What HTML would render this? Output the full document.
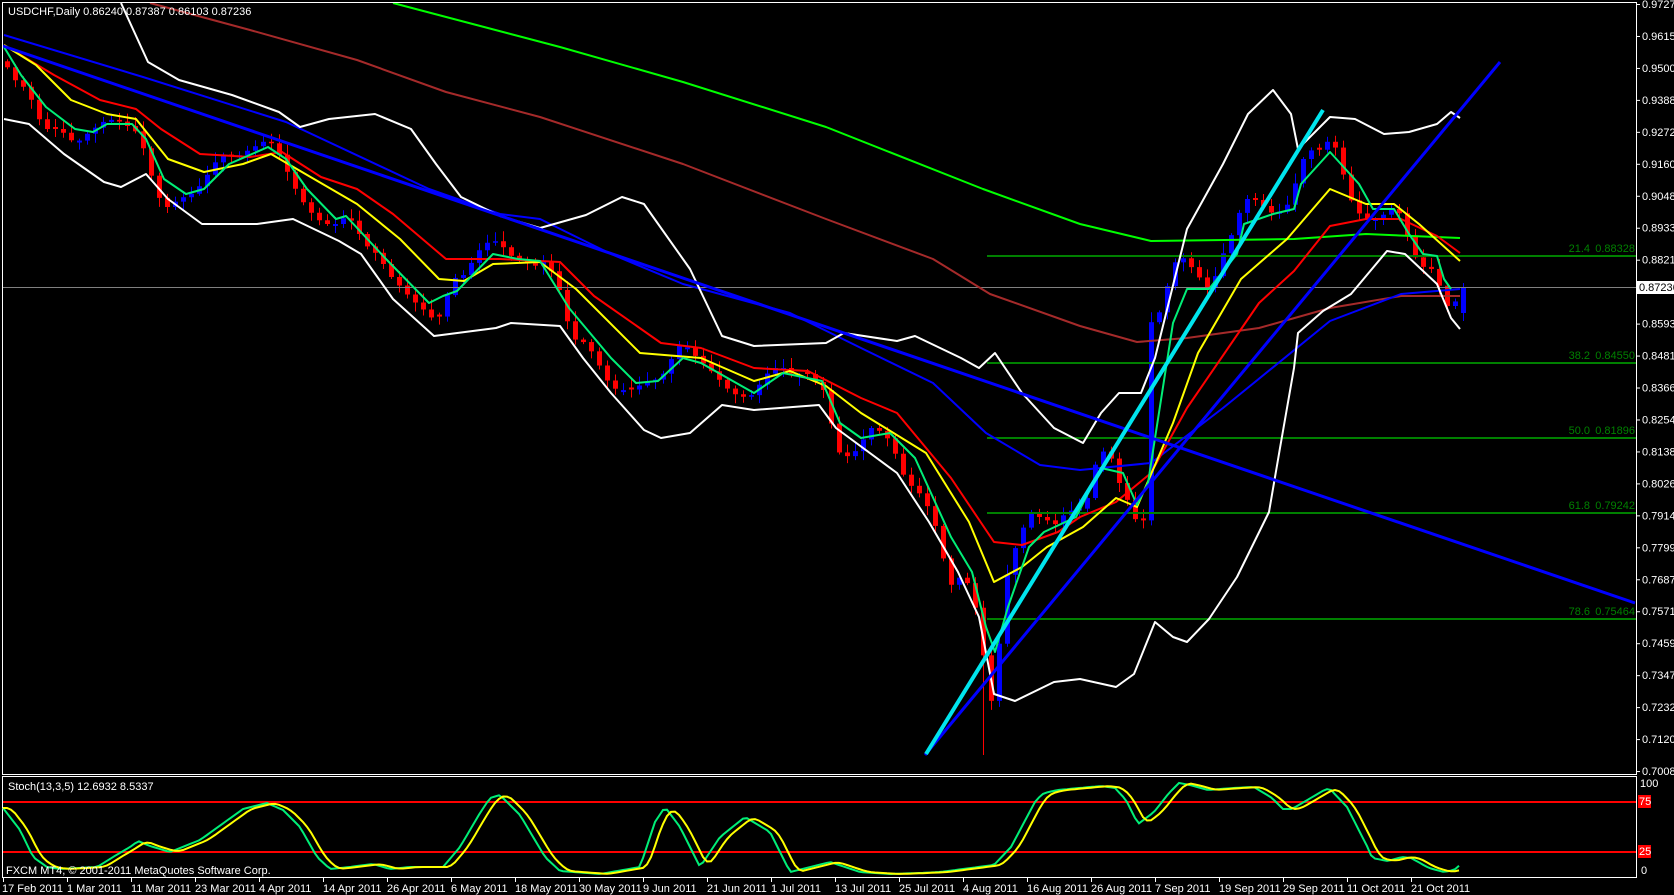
<!DOCTYPE html>
<html><head><meta charset="utf-8"><style>
html,body{margin:0;padding:0;background:#000;width:1674px;height:895px;overflow:hidden}
svg{display:block}
text{font-family:"Liberation Sans",sans-serif;font-size:11px}
</style></head><body>
<svg id="s" width="1674" height="895" viewBox="0 0 1674 895" xmlns="http://www.w3.org/2000/svg">
<rect width="1674" height="895" fill="#000"/>
<g id="g"></g>
<g fill="none" stroke-linejoin="round">
<polyline stroke="#808080" stroke-width="1" points="3,287.5 1636,287.5"/>
<g stroke="#008000" stroke-width="2">
<line x1="987" y1="256" x2="1636" y2="256"/><line x1="987" y1="363" x2="1636" y2="363"/>
<line x1="987" y1="438" x2="1636" y2="438"/><line x1="987" y1="513" x2="1636" y2="513"/>
<line x1="987" y1="619" x2="1636" y2="619"/></g>
<polyline stroke="#00ff00" stroke-width="2" points="393,3 560,47 683,82 826,127 983,189 1080,224 1151,241 1294,239 1366,234 1460,238"/>
<polyline stroke="#a52a2a" stroke-width="2" points="150,3 250,30 357,60 446,92 540,117 683,164 826,219 933,259 990,294 1080,326 1137,342 1187,338 1259,328 1330,308 1401,296 1460,296"/>
<polyline stroke="#0000ff" stroke-width="2" points="4,35 143,77 286,122 429,189 500,214 540,219 611,254 683,284 790,313 861,348 933,383 986,433 1040,465 1080,470 1151,463 1223,408 1330,321 1401,294 1460,289"/>
<polyline stroke="#ffffff" stroke-width="2" points="121,3 148,62 179,80 232,95 279,112 300,127 329,119 375,114 411,129 436,164 461,197 500,216 540,228 586,215 622,197 644,204 690,269 722,336 754,346 826,343 844,333 897,341 915,336 961,358 979,368 995,353 1022,393 1054,428 1083,443 1101,413 1119,393 1141,393 1155,358 1187,229 1223,164 1248,114 1273,90 1291,114 1298,149 1330,117 1355,119 1384,134 1409,132 1437,124 1451,112 1460,118"/>
<polyline stroke="#ffffff" stroke-width="2" points="4,119 29,124 64,154 104,182 121,187 146,174 168,199 202,224 257,224 293,219 339,241 361,254 393,299 434,336 496,328 511,323 560,326 583,358 611,393 644,430 661,438 690,433 722,405 754,410 819,405 836,428 897,473 929,522 958,572 979,617 994,694 1015,701 1054,682 1080,679 1116,687 1134,674 1155,622 1173,637 1187,642 1209,619 1237,577 1269,512 1280,448 1294,368 1298,333 1323,311 1351,294 1387,251 1405,254 1437,284 1451,318 1460,329"/>
<polyline stroke="#ff0000" stroke-width="2" points="4,45 54,75 100,100 136,109 161,129 200,154 250,157 282,152 321,177 357,189 393,214 446,259 500,259 560,262 594,296 661,343 701,348 754,368 808,371 861,398 897,413 951,478 994,542 1022,545 1058,532 1080,517 1116,502 1151,473 1187,408 1259,303 1294,271 1330,226 1366,219 1401,219 1437,236 1460,253"/>
<polyline stroke="#ffff00" stroke-width="2" points="4,45 36,65 71,100 107,114 136,119 168,159 204,172 243,164 271,154 314,179 357,204 400,239 439,279 464,281 493,264 540,262 576,289 640,353 701,358 754,381 790,371 826,386 861,413 926,453 969,522 994,582 1022,567 1047,547 1083,527 1116,498 1137,507 1173,423 1198,353 1241,279 1287,239 1330,189 1366,204 1394,204 1419,224 1460,261"/>
<polyline stroke="#00ee77" stroke-width="2" points="4,47 21,75 46,107 75,129 93,132 107,124 132,124 146,139 164,179 186,194 204,189 229,164 268,147 286,159 307,189 336,219 346,216 386,259 429,303 443,296 457,291 493,254 518,259 540,261 569,308 611,358 636,383 658,381 683,358 701,363 754,393 783,373 822,381 840,423 861,438 890,433 915,458 951,537 972,572 986,627 995,652 1008,607 1029,547 1044,532 1076,517 1101,468 1123,473 1137,505 1148,483 1173,323 1187,289 1209,289 1237,254 1244,224 1273,214 1294,209 1301,184 1330,152 1359,184 1373,209 1394,209 1409,234 1423,254 1437,256 1444,279 1451,289"/>
<line stroke="#0000ff" stroke-width="3" x1="3" y1="46" x2="1635" y2="603"/>
<line stroke="#0000ff" stroke-width="3" x1="925" y1="755" x2="1500" y2="62"/>
<line stroke="#00e5ee" stroke-width="4" x1="926" y1="754" x2="1323" y2="110"/>
</g>
<g fill="#008000" text-anchor="end">
<text x="1590" y="252">21.4</text><text x="1635" y="252">0.88328</text>
<text x="1590" y="359">38.2</text><text x="1635" y="359">0.84550</text>
<text x="1590" y="434">50.0</text><text x="1635" y="434">0.81896</text>
<text x="1590" y="509">61.8</text><text x="1635" y="509">0.79242</text>
<text x="1590" y="615">78.6</text><text x="1635" y="615">0.75464</text>
</g>
<rect x="2.5" y="2.5" width="1634" height="772" fill="none" stroke="#fff" stroke-width="1"/>
<rect x="2.5" y="776.5" width="1634" height="101" fill="none" stroke="#fff" stroke-width="1"/>
<line x1="3" y1="802" x2="1636" y2="802" stroke="#ff0000" stroke-width="2"/>
<line x1="3" y1="852" x2="1636" y2="852" stroke="#ff0000" stroke-width="2"/>
<g id="st" fill="none" stroke-width="2"></g>
<g fill="#fff" id="ax"></g>
<text x="8" y="15" fill="#fff">USDCHF,Daily  0.86240 0.87387 0.86103 0.87236</text>
<text x="8" y="790" fill="#fff">Stoch(13,3,5) 12.6932 8.5337</text>
<text x="6" y="874" fill="#fff">FXCM MT4, © 2001-2011 MetaQuotes Software Corp.</text>
<rect x="1638" y="795" width="13" height="13" fill="#ff0000"/><text x="1639" y="805" fill="#fff">75</text>
<rect x="1638" y="845" width="13" height="13" fill="#ff0000"/><text x="1639" y="855" fill="#fff">25</text>
<text x="1640" y="787" fill="#fff">100</text><text x="1641" y="874" fill="#fff">0</text>
<rect x="1637" y="281" width="37" height="13" fill="#fff"/><text x="1639" y="291" fill="#000">0.87236</text>
</svg>
<script>
(function(){
var NS="http://www.w3.org/2000/svg";
function el(p,t,a,txt){var e=document.createElementNS(NS,t);for(var k in a)e.setAttribute(k,a[k]);if(txt!=null)e.textContent=txt;p.appendChild(e);return e;}
function interp(P,x){if(x<=P[0][0])return P[0][1];for(var i=1;i<P.length;i++){if(x<=P[i][0]){var a=P[i-1],b=P[i];if(b[0]==a[0])return b[1];return a[1]+(b[1]-a[1])*(x-a[0])/(b[0]-a[0]);}}return P[P.length-1][1];}
var C=[[4,60],[11,77],[27,90],[43,129],[59,129],[75,144],[89,132],[107,119],[121,122],[139,134],[146,159],[155,189],[164,209],[179,199],[195,192],[211,169],[220,154],[236,157],[250,149],[268,139],[282,159],[291,182],[307,209],[323,224],[339,224],[346,214],[355,226],[364,244],[379,256],[388,274],[395,281],[411,299],[427,313],[436,323],[443,308],[452,279],[466,274],[475,254],[491,239],[500,244],[514,259],[536,266],[546,259],[555,281],[563,299],[570,338],[586,343],[595,358],[611,388],[628,391],[644,383],[660,378],[667,368],[676,348],[683,343],[697,358],[708,368],[722,383],[731,393],[747,398],[754,393],[763,378],[772,368],[786,368],[795,378],[804,371],[811,378],[826,393],[835,448],[844,458],[860,448],[867,428],[876,428],[892,443],[899,468],[908,483],[924,498],[931,517],[940,537],[947,587],[956,582],[963,572],[972,597],[979,622],[988,697],[995,706],[1002,597],[1011,557],[1020,537],[1028,512],[1036,517],[1044,517],[1053,527],[1060,517],[1069,512],[1076,507],[1085,512],[1091,470],[1100,458],[1107,443],[1116,478],[1125,493],[1132,517],[1139,522],[1144,520],[1150,322],[1155,323],[1164,299],[1171,269],[1180,254],[1187,264],[1196,271],[1203,286],[1212,289],[1219,259],[1226,249],[1235,224],[1244,199],[1251,199],[1259,201],[1267,211],[1275,214],[1284,209],[1291,199],[1300,164],[1309,149],[1316,154],[1323,144],[1332,139],[1339,159],[1348,194],[1355,209],[1364,219],[1371,219],[1380,219],[1387,209],[1396,209],[1403,219],[1410,249],[1419,264],[1426,269],[1434,269],[1443,299],[1451,313],[1460,287]];
var g=document.getElementById('g');
var prev=null;
for(var i=0;i<183;i++){var x=7+8*i;var c=interp(C,x);var o=(prev==null)?c-6:prev;
 if(i==182)o=313;
 if(Math.abs(c-o)<1.5)o=c+((i%2)?2:-2);
 var r1=((i*37)%9)+2,r2=((i*53)%8)+2;
 var hi=Math.min(o,c)-r1,lo=Math.max(o,c)+r2;
 if(Math.abs(x-983)<5)lo=755;
 var col=(c<o)?'#0000ff':'#ff0000';
 el(g,'line',{x1:x+0.5,y1:hi,x2:x+0.5,y2:lo,stroke:col,'stroke-width':1});
 el(g,'rect',{x:x-2,y:Math.min(o,c),width:5,height:Math.max(1,Math.abs(c-o)),fill:col});
 prev=c;}
var S=[[3,69],[20,47],[33,20],[47,10],[60,8],[97,10],[113,20],[130,30],[138,36],[150,31],[170,25],[200,37],[243,68],[267,74],[283,67],[300,50],[317,20],[330,8],[350,10],[373,13],[390,8],[410,10],[443,10],[460,30],[480,64],[490,79],[500,82],[520,62],[545,20],[560,6],[600,3],[640,10],[655,55],[665,70],[680,50],[700,10],[720,40],[745,60],[770,45],[790,5],[830,15],[860,5],[890,3],[920,4],[940,5],[994,12],[1011,30],[1036,77],[1044,84],[1058,87],[1101,91],[1115,89],[1126,77],[1138,53],[1154,65],[1169,84],[1179,94],[1190,92],[1208,87],[1233,89],[1254,90],[1272,79],[1283,68],[1292,68],[1326,88],[1331,87],[1347,70],[1369,27],[1372,19],[1388,16],[1402,20],[1411,19],[1429,9],[1444,5],[1454,7],[1460,12]];
function sy(v){return 877-v*1.0;}
var pk=[],pd=[];
for(var x=3;x<=1460;x+=4){pk.push(x+','+sy(interp(S,x)).toFixed(1));
 var d=(interp(S,x-4)+interp(S,x-8)+interp(S,x-12))/3;pd.push(x+','+sy(d).toFixed(1));}
var st=document.getElementById('st');
el(st,'polyline',{points:pk.join(' '),stroke:'#00ee77'});
el(st,'polyline',{points:pd.join(' '),stroke:'#ffff00'});
var ax=document.getElementById('ax');
var L=['0.97275','0.96155','0.95000','0.93880','0.92725','0.91605','0.90485','0.89330','0.88210','0.87095','0.85935','0.84815','0.83660','0.82540','0.81385','0.80265','0.79145','0.77990','0.76870','0.75715','0.74595','0.73475','0.72320','0.71200','0.70080'];
for(var k=0;k<L.length;k++){var y=4+k*31.96;el(ax,'rect',{x:1636,y:y,width:4,height:1});
 if(k!=9)el(ax,'text',{x:1642,y:y+4},L[k]);}
var D=['17 Feb 2011','1 Mar 2011','11 Mar 2011','23 Mar 2011','4 Apr 2011','14 Apr 2011','26 Apr 2011','6 May 2011','18 May 2011','30 May 2011','9 Jun 2011','21 Jun 2011','1 Jul 2011','13 Jul 2011','25 Jul 2011','4 Aug 2011','16 Aug 2011','26 Aug 2011','7 Sep 2011','19 Sep 2011','29 Sep 2011','11 Oct 2011','21 Oct 2011'];
for(var k=0;k<D.length;k++){var x=3+64*k;el(ax,'rect',{x:x,y:877,width:1,height:5});el(ax,'text',{x:x+(k==0?-1:0),y:892},D[k]);}
})();
</script>
</body></html>
